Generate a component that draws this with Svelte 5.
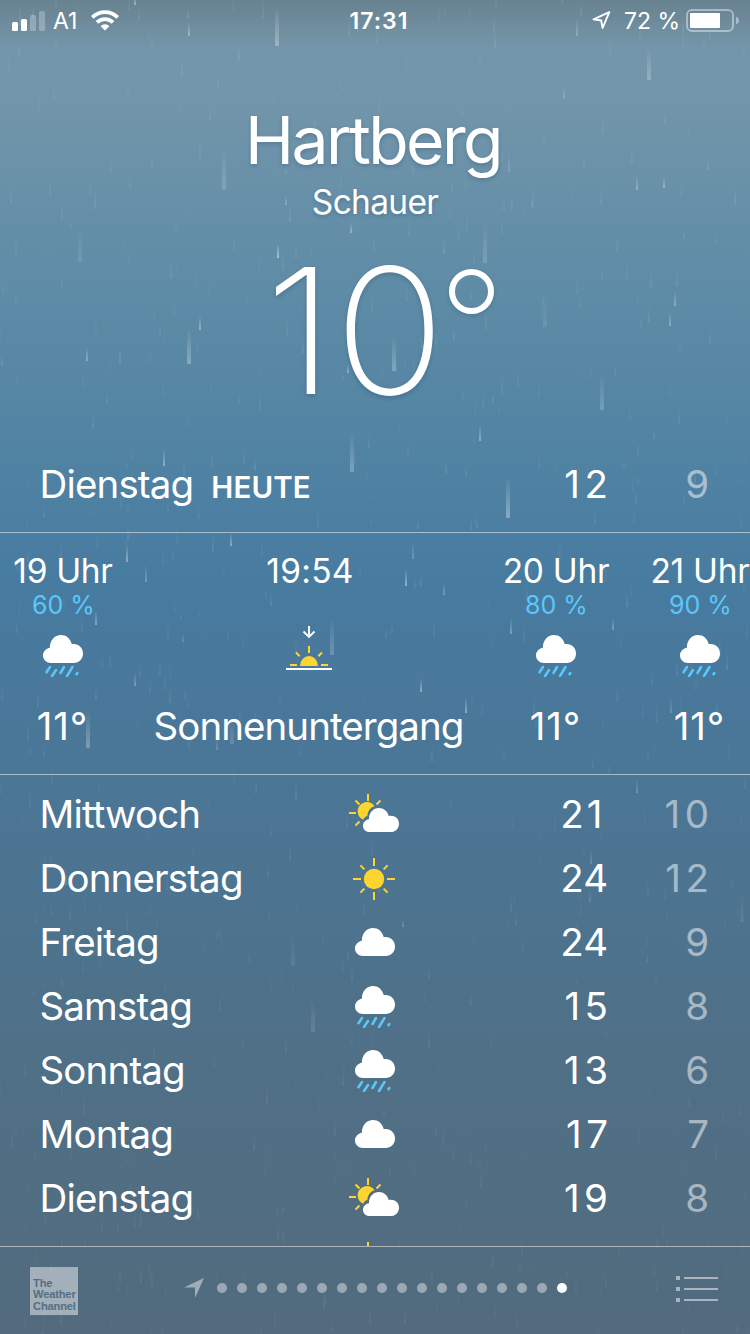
<script>
  const hours = [
    { time: "19 Uhr", chance: "60 %", icon: "rain", value: "11°" },
    { time: "19:54", chance: "", icon: "sunset", value: "Sonnenuntergang" },
    { time: "20 Uhr", chance: "80 %", icon: "rain", value: "11°" },
    { time: "21 Uhr", chance: "90 %", icon: "rain", value: "11°" },
  ];

  const days = [
    { name: "Mittwoch", icon: "partly", high: "21", low: "10" },
    { name: "Donnerstag", icon: "sun", high: "24", low: "12" },
    { name: "Freitag", icon: "cloud", high: "24", low: "9" },
    { name: "Samstag", icon: "rain", high: "15", low: "8" },
    { name: "Sonntag", icon: "rain", high: "13", low: "6" },
    { name: "Montag", icon: "cloud", high: "17", low: "7" },
    { name: "Dienstag", icon: "partly", high: "19", low: "8" },
    { name: "", icon: "partly", high: "", low: "" },
  ];

  const dots = Array.from({ length: 18 }, (_, i) => i);

  // x, bottom, length, width, opacity
  const bigDrops = [
    [277, 46, 40, 4, 0.3], [649, 80, 32, 4, 0.25], [224, 190, 45, 4, 0.16],
    [485, 263, 40, 4, 0.16], [189, 364, 36, 4, 0.28], [394, 371, 36, 4, 0.26],
    [602, 410, 36, 4, 0.2], [352, 472, 42, 4, 0.25], [508, 518, 42, 4, 0.35],
    [332, 655, 38, 4, 0.2], [88, 748, 38, 4, 0.28], [232, 744, 26, 4, 0.16],
    [313, 1032, 34, 4, 0.12], [80, 262, 36, 4, 0.1], [545, 327, 36, 4, 0.09],
    [293, 966, 30, 4, 0.08], [742, 922, 30, 3, 0.1],
    [189, 36, 14, 2, 0.35], [135, 5, 8, 2, 0.4], [577, 36, 18, 1.5, 0.3],
    [278, 258, 14, 2, 0.5], [509, 172, 18, 1, 0.35], [200, 330, 14, 2, 0.35],
    [351, 233, 10, 2, 0.35], [286, 205, 9, 1, 0.5], [348, 373, 10, 2, 0.3],
    [87, 361, 14, 2, 0.3], [670, 326, 14, 2, 0.3], [675, 306, 14, 2, 0.3],
    [164, 466, 18, 2, 0.35], [480, 441, 16, 2, 0.35], [637, 190, 14, 2, 0.3],
    [664, 188, 12, 2, 0.3], [564, 98, 12, 1, 0.4], [127, 562, 18, 2, 0.4],
    [146, 582, 18, 1, 0.5], [96, 625, 15, 1.5, 0.45], [406, 586, 18, 1.5, 0.55],
    [413, 559, 18, 1, 0.4], [444, 595, 12, 1.5, 0.35], [231, 546, 14, 2, 0.35],
    [421, 692, 14, 2, 0.4], [466, 713, 16, 1.5, 0.5], [135, 686, 14, 1.5, 0.35],
    [511, 634, 16, 1.5, 0.4], [613, 630, 12, 1.5, 0.35], [217, 750, 12, 1, 0.4],
    [671, 713, 16, 1, 0.35], [183, 642, 8, 1, 0.35], [403, 927, 8, 1, 0.4],
    [590, 902, 12, 1, 0.3], [637, 793, 14, 1, 0.4], [591, 864, 14, 1, 0.35],
    [66, 885, 12, 2, 0.16],
  ];

  let seed = 31;
  function random() {
    seed = (seed * 16807) % 2147483647;
    return seed / 2147483647;
  }

  const smallDrops = Array.from({ length: 620 }, () => {
    const y = random() * 1360;
    const fade = y > 800 ? 0.7 : 1;
    return [
      Math.round(random() * 750),
      y,
      8 + random() * 12,
      random() > 0.4 ? 2 : 1.5,
      (0.03 + random() * 0.075) * fade,
    ];
  });

  const drops = [...smallDrops, ...bigDrops];
</script>

{#snippet cloud()}
  <path
    fill="#fff"
    d="M8 28C3.600 28 0 24.700 0 20.500C0 16.600 3 13.300 6.900 12.700C6.700 5.500 11.600 0 18 0C23 0 27.300 3.300 28.700 9.100C35 8.100 40 12.300 40 18.500C40 24 36 28 30.500 28Z"
  />
{/snippet}

{#snippet weatherIcon(kind)}
  {#if kind === "rain"}
    <svg class="icon" width="40" height="42" viewBox="0 0 40 42">
      {@render cloud()}
      <path
        d="M7 32 3.500 37.300M13 35 9 41M21 32 17.500 38M29.500 32 24 41M34.300 38 33.500 39.200"
        stroke="#5ac8fa"
        stroke-width="2.500"
        stroke-linecap="round"
      />
    </svg>
  {:else if kind === "cloud"}
    <svg class="icon cloud" width="40" height="28" viewBox="0 0 40 28">
      {@render cloud()}
    </svg>
  {:else if kind === "sun"}
    <svg class="icon sun" width="42" height="42" viewBox="0 0 42 42">
      <circle cx="21" cy="21" r="10.200" fill="#fed52f" />
      <path
        d="M21 0V8M21 34V42M0 21H8M34 21H42M7.400 7.400 11.400 11.400M30.600 30.600 34.600 34.600M7.400 34.600 11.400 30.600M30.600 11.400 34.600 7.400"
        stroke="#fed52f"
        stroke-width="2"
      />
    </svg>
  {:else if kind === "partly"}
    <svg class="icon partly" width="50" height="38" viewBox="0 0 50 38">
      <path
        d="M19 0V7M0 19H7M6.500 6.500 10.500 10.500M31.500 6.500 27.500 10.500M6.500 31.500 10.500 27.500"
        stroke="#fed52f"
        stroke-width="2"
      />
      <path
        fill="#fed52f"
        d="M14.300 25.800A9.200 9.200 0 1 1 25.500 12.200C21.400 13.400 18.700 17 18.300 22C16 22.600 14.900 24 14.300 25.800Z"
      />
      <path
        fill="#fff"
        d="M20.500 38C16.700 38 14 35.300 14 31.700C14 28.400 16.500 25.700 20 25.200C19.800 18.800 24.300 14 30 14C34.500 14 38.500 17 39.700 22C45.500 21 50 24.500 50 29.700C50 34.600 46.500 38 41.500 38Z"
      />
    </svg>
  {:else}
    <svg class="icon sunset" width="46" height="45" viewBox="0 0 46 45">
      <path d="M23 1V12M17.500 6.500 23 12 28.500 6.500" fill="none" stroke="#fff" stroke-width="1.900" />
      <path
        d="M23 21V28M10 27.500 13.700 31.200M36 27.500 32.300 31.200M4 40H11M35 40H42"
        stroke="#fed52f"
        stroke-width="2"
      />
      <path d="M14 41A9 10 0 0 1 32 41Z" fill="#fed52f" />
      <path d="M0 44H46" stroke="#fff" stroke-width="2" />
    </svg>
  {/if}
{/snippet}

{#snippet range(high, low)}
  <span class="high" class:one-first={high.startsWith("1")} class:one-last={high.endsWith("1")}>{high}</span>
  <span class="low" class:one-first={low.startsWith("1")}>{low}</span>
{/snippet}

<main class="screen">
  <svg class="rain" viewBox="0 0 750 1334" width="750" height="1334">
    <defs>
      <linearGradient id="drop" x1="0" y1="0" x2="0" y2="1">
        <stop offset="0" stop-color="#fff" stop-opacity="0" />
        <stop offset="1" stop-color="#fff" />
      </linearGradient>
    </defs>
    {#each drops as [x, y, length, width, opacity]}
      <rect x={x - width / 2} y={y - length} {width} height={length} rx={width / 4} fill="url(#drop)" {opacity} />
    {/each}
  </svg>

  <header class="status">
    <div class="left">
      <svg width="33" height="20" viewBox="0 0 33 20" fill="#fff">
        <rect y="11" width="6" height="9" rx="1.500" />
        <rect x="9" y="8" width="6" height="12" rx="1.500" />
        <rect x="18" y="4" width="6" height="16" rx="1.500" opacity="0.25" />
        <rect x="27" width="6" height="20" rx="1.500" opacity="0.25" />
      </svg>
      <span class="carrier">A1</span>
      <svg width="28" height="21" viewBox="0 0 28 21" fill="none" stroke="#fff" stroke-width="3.800">
        <path d="M1.300 7.300A18 18 0 0 1 26.700 7.300" />
        <path d="M6 12.400A11.400 11.400 0 0 1 22 12.400" />
        <path d="M9.600 16.200A6.200 6.200 0 0 1 18.400 16.200L14 20.500Z" fill="#fff" stroke="none" />
      </svg>
    </div>
    <div class="clock">17:31</div>
    <div class="right">
      <svg width="19" height="19" viewBox="0 0 19 19" fill="none">
        <path d="M1.500 8.300 17.300 1.200 10.600 17 9.200 9.500Z" stroke="#fff" stroke-width="1.900" stroke-linejoin="round" />
      </svg>
      <span class="percent">72 %</span>
      <svg width="53" height="23" viewBox="0 0 53 23">
        <rect x="1" y="1" width="46" height="21" rx="5" fill="none" stroke="#fff" stroke-opacity="0.420" stroke-width="2" />
        <rect x="4" y="4" width="30" height="15" rx="1" fill="#fff" />
        <path d="M50 7.500C54 9 54 14 50 15.500Z" fill="#fff" opacity="0.420" />
      </svg>
    </div>
  </header>

  <section class="current">
    <h1>Hartberg</h1>
    <p class="condition">Schauer</p>
    <div class="temperature"><span class="digits">10</span><span class="degree"></span></div>
  </section>

  <section class="today">
    <span class="name">Dienstag</span>
    <span class="tag">HEUTE</span>
    {@render range("12", "9")}
  </section>

  <section class="hourly">
    {#each hours as hour}
      <div class="hour" class:wide={hour.icon === "sunset"}>
        <span class="time">{hour.time}</span>
        <span class="chance">{hour.chance}</span>
        <span class="symbol">{@render weatherIcon(hour.icon)}</span>
        <span class="value">{hour.value}</span>
      </div>
    {/each}
  </section>

  <section class="daily">
    {#each days as day}
      <div class="day">
        <span class="name">{day.name}</span>
        <span class="symbol">{@render weatherIcon(day.icon)}</span>
        {@render range(day.high, day.low)}
      </div>
    {/each}
  </section>

  <footer>
    <div class="logo">
      <span>The</span>
      <span>Weather</span>
      <span>Channel</span>
    </div>
    <div class="pages">
      <svg width="20" height="20" viewBox="0 0 20 20">
        <path d="M0 9.500 20 0 11 20V9.500Z" fill="#fff" opacity="0.450" />
      </svg>
      {#each dots as dot}
        <i class="dot" class:active={dot === dots.length - 1}></i>
      {/each}
    </div>
    <svg class="list" width="42" height="26" viewBox="0 0 42 26" fill="#fff" opacity="0.500">
      <path d="M0 0H4V4H0ZM0 11H4V15H0ZM0 22H4V26H0ZM8 1H42V3H8ZM8 12H42V14H8ZM8 23H42V25H8Z" />
    </svg>
  </footer>
</main>

<style>
  :global(body) {
    margin: 0;
  }

  .screen {
    position: relative;
    display: flex;
    flex-direction: column;
    width: 750px;
    height: 1334px;
    overflow: hidden;
    box-sizing: border-box;
    color: #fff;
    font-family: Inter, "Liberation Sans", sans-serif;
    background: linear-gradient(
      #688290 0,
      #7496aa 48px,
      #7195aa 110px,
      #658fa8 220px,
      #5586a4 400px,
      #477ba0 580px,
      #4a7798 740px,
      #4d738e 920px,
      #506f85 1100px,
      #536b7d 1334px
    );
  }

  .screen > :not(.rain) {
    position: relative;
    flex-shrink: 0;
  }

  .rain {
    position: absolute;
    inset: 0;
  }

  svg {
    display: block;
    flex-shrink: 0;
  }

  .status {
    display: grid;
    grid-template-columns: 1fr auto 1fr;
    align-items: center;
    height: 41px;
    padding: 0 11px 0 12px;
    box-sizing: border-box;
    font-size: 23px;
  }

  .left,
  .right {
    display: flex;
    align-items: center;
  }

  .right {
    justify-content: flex-end;
  }

  .carrier {
    margin: 0 14px 0 8px;
    letter-spacing: 0;
  }

  .clock {
    padding-left: 7px;
    font-weight: 600;
    letter-spacing: 1px;
  }

  .percent {
    margin: 0 6px 0 13px;
  }

  .current {
    height: 395px;
    text-align: center;
    text-shadow: 0 2px 4px rgba(0, 30, 60, 0.2);
  }

  h1 {
    margin: 0;
    padding: 59px 4px 0 0;
    font-size: 66px;
    font-weight: 400;
    line-height: 80px;
    letter-spacing: -2.6px;
  }

  .condition {
    margin: 0;
    padding: 2px 0 0;
    font-size: 33.5px;
    line-height: 40px;
    letter-spacing: -0.7px;
  }

  .temperature {
    display: flex;
    justify-content: center;
    padding: 0 0 0 17px;
    font-size: 175px;
    font-weight: 200;
    line-height: 216px;
  }

  .digits {
    letter-spacing: 0;
    transform: scaleX(1.05);
    transform-origin: right;
  }

  .degree {
    width: 33px;
    height: 33px;
    margin: 47px 0 0 4px;
    border: 6px solid #fff;
    border-radius: 50%;
    box-shadow: 0 2px 4px rgba(0, 30, 60, 0.15);
  }

  .today {
    display: flex;
    align-items: baseline;
    height: 96px;
    padding: 0 41px 0 39.5px;
    border-bottom: 1px solid rgba(255, 255, 255, 0.5);
    font-size: 38.5px;
    line-height: 96px;
  }

  .name {
    letter-spacing: -0.85px;
  }

  .tag {
    margin-left: 18px;
    font-size: 29.5px;
    font-weight: 600;
    letter-spacing: 0.1px;
  }

  .high,
  .low {
    width: 101px;
    text-align: right;
    letter-spacing: 0;
  }

  .high {
    margin-left: auto;
  }

  .low {
    opacity: 0.5;
  }

  /* keeps the narrow 1 in the same column as the wider digits */
  .one-first {
    position: relative;
    left: 4.5px;
    letter-spacing: 4.5px;
  }

  .one-last {
    position: relative;
    left: -2.5px;
    letter-spacing: 3px;
  }

  .hourly {
    display: flex;
    height: 241px;
    margin-left: -9px;
    border-bottom: 1px solid rgba(255, 255, 255, 0.5);
  }

  .hour {
    display: flex;
    flex: 0 0 144px;
    flex-direction: column;
    align-items: center;
    white-space: nowrap;
  }

  .hour.wide {
    flex-basis: 349px;
  }

  .time {
    height: 40px;
    margin-top: 18px;
    font-size: 33.5px;
    line-height: 40px;
    letter-spacing: -0.3px;
  }

  .wide .time {
    letter-spacing: 0.3px;
    padding-left: 1px;
  }

  .chance {
    height: 30px;
    padding-left: 1px;
    color: #5ac8fa;
    font-size: 25px;
    line-height: 29px;
  }

  .hour .symbol {
    display: flex;
    align-items: center;
    height: 56px;
    margin-top: 7px;
  }

  .icon.sunset {
    margin: 0 2px 18px 0;
  }

  .value {
    margin-top: 18px;
    padding-right: 1px;
    font-size: 38.5px;
    line-height: 48px;
    letter-spacing: 0.8px;
  }

  .wide .value {
    padding-right: 2px;
    letter-spacing: -0.95px;
  }

  .daily {
    height: 471px;
    padding-top: 8px;
    box-sizing: border-box;
    overflow: hidden;
  }

  .day {
    display: grid;
    grid-template-columns: 285.5px 98px 1fr 101px;
    align-items: center;
    height: 64px;
    padding: 0 41px 0 39.5px;
    font-size: 38.5px;
  }

  .day > :not(.symbol) {
    padding-bottom: 2px;
  }

  .day .high {
    justify-self: end;
  }

  .day .symbol {
    display: flex;
    justify-content: center;
  }

  .day .icon {
    margin-left: 2px;
  }

  .day .icon.cloud {
    margin-bottom: 2px;
  }

  .day .icon.sun {
    margin-left: 0;
  }

  .day .icon.partly {
    margin: 0 0 4px;
  }

  footer {
    display: flex;
    align-items: center;
    justify-content: space-between;
    height: 87px;
    padding: 0 32px 2px 30px;
    box-sizing: border-box;
    border-top: 1px solid rgba(255, 255, 255, 0.5);
    background: rgba(83, 110, 130, 0.15);
  }

  .logo {
    display: flex;
    flex-direction: column;
    width: 48px;
    height: 48px;
    margin-top: 3px;
    padding: 11px 0 0 3px;
    box-sizing: border-box;
    color: #536f83;
    background: rgba(255, 255, 255, 0.47);
    font-family: "Liberation Sans", sans-serif;
    font-size: 11.2px;
    font-weight: 700;
    line-height: 11.8px;
    letter-spacing: -0.2px;
  }

  .pages {
    display: flex;
    align-items: center;
    margin-left: 1px;
    padding-bottom: 3px;
  }

  .pages svg {
    margin-right: 8px;
  }

  .dot {
    width: 10px;
    height: 10px;
    margin: 0 5px;
    border-radius: 50%;
    background: rgba(255, 255, 255, 0.42);
  }

  .dot.active {
    background: #fff;
  }
</style>
